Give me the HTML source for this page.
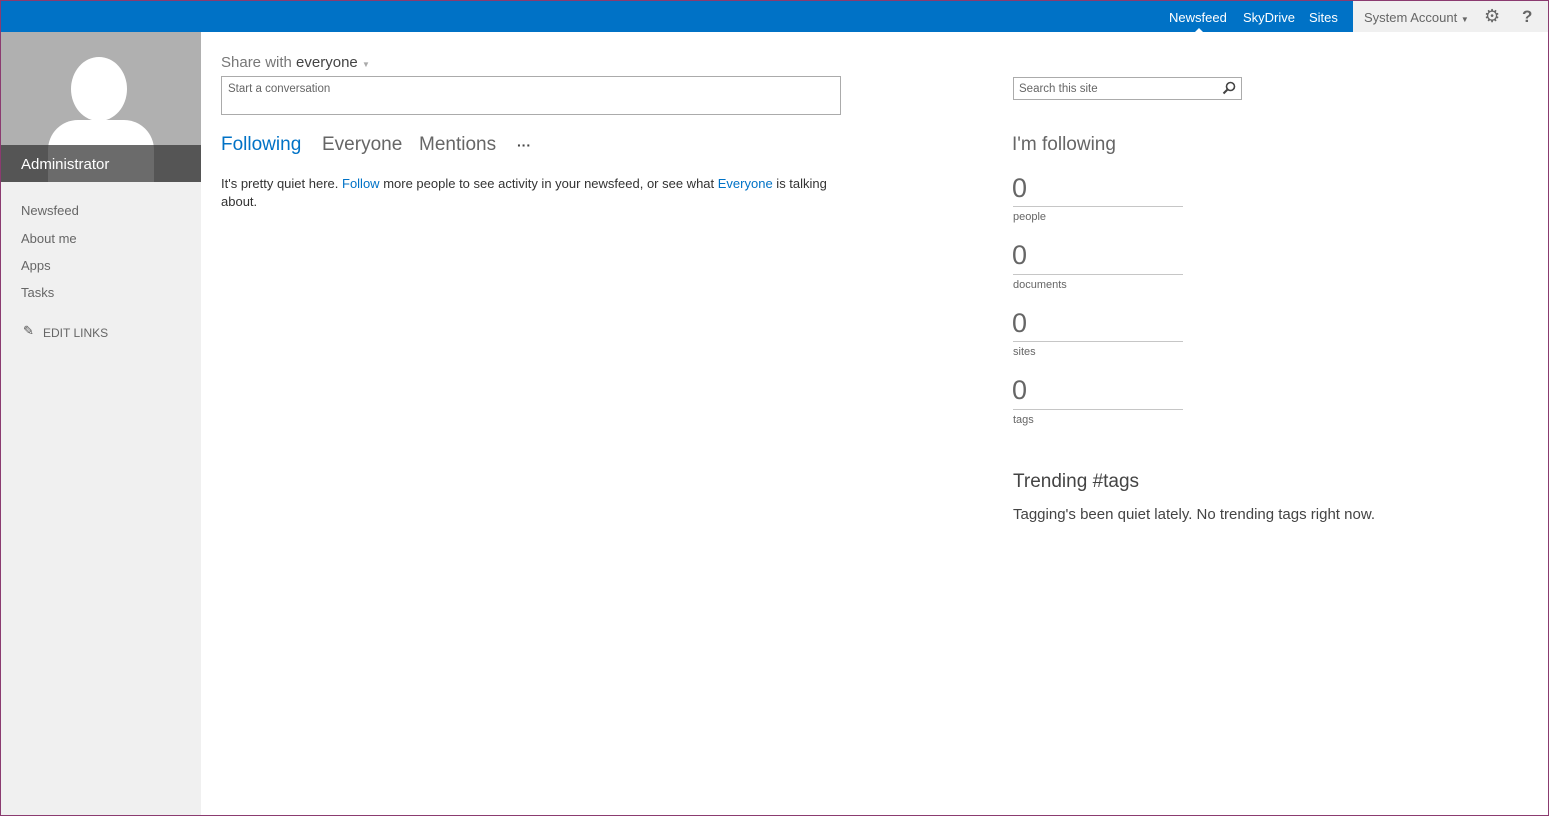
<!DOCTYPE html>
<html><head><meta charset="utf-8"><style>
*{margin:0;padding:0;box-sizing:border-box}
body{width:1549px;height:816px;overflow:hidden;background:#fff;font-family:"Liberation Sans",sans-serif;color:#444;position:relative}
.a{position:absolute;white-space:nowrap}
#frame{position:absolute;left:0;top:0;width:1549px;height:816px;border:1px solid #8b3b70;pointer-events:none;z-index:9}
#bar{position:absolute;left:0;top:0;width:1549px;height:32px;background:#0072c6}
#acct{position:absolute;left:1353px;top:0;width:196px;height:32px;background:#f0f0f0}
#side{position:absolute;left:0;top:32px;width:201px;height:784px;background:#f0f0f0}
#pic{position:absolute;left:0;top:32px;width:201px;height:150px;background:#b0b0b0;overflow:hidden}
.blue{color:#0072c6}
.num{font-size:27px;color:#666}
.line{position:absolute;left:1013px;width:170px;height:1px;background:#c6c6c6}
.lbl{font-size:11px;color:#666}
</style></head><body>
<div id="bar"></div>
<div class="a" style="left:1169px;top:10px;font-size:13px;color:#fff">Newsfeed</div>
<div class="a" style="left:1195px;top:28px;width:0;height:0;border-left:4px solid transparent;border-right:4px solid transparent;border-bottom:4px solid #fff"></div>
<div class="a" style="left:1243px;top:10px;font-size:13px;color:#fff">SkyDrive</div>
<div class="a" style="left:1309px;top:10px;font-size:13px;color:#fff">Sites</div>
<div id="acct"></div>
<div class="a" style="left:1364px;top:10px;font-size:13px;color:#666">System Account <span style="font-size:8px">▼</span></div>
<div class="a" style="left:1484px;top:6px;font-size:18px;color:#666">⚙</div>
<div class="a" style="left:1522px;top:7px;font-size:17px;font-weight:bold;color:#666">?</div>

<div id="side"></div>
<div id="pic">
<div class="a" style="left:71px;top:25px;width:56px;height:64px;border-radius:50%;background:#fff"></div>
<div class="a" style="left:48px;top:88px;width:106px;height:80px;background:#fff;border-radius:30px 30px 0 0"></div>
<div class="a" style="left:0;top:113px;width:201px;height:37px;background:rgba(50,50,50,0.72)"></div>
<div class="a" style="left:21px;top:124px;font-size:15px;color:#fff">Administrator</div>
</div>
<div class="a" style="left:21px;top:203px;font-size:13px;color:#666">Newsfeed</div>
<div class="a" style="left:21px;top:231px;font-size:13px;color:#666">About me</div>
<div class="a" style="left:21px;top:258px;font-size:13px;color:#666">Apps</div>
<div class="a" style="left:21px;top:285px;font-size:13px;color:#666">Tasks</div>
<div class="a" style="left:23px;top:323px;font-size:13px;color:#555">✎</div>
<div class="a" style="left:43px;top:326px;font-size:12px;color:#666">EDIT LINKS</div>

<div class="a" style="left:221px;top:54px;font-size:15px;color:#777">Share with <span style="color:#444">everyone</span> <span style="font-size:8px;color:#aaa">▼</span></div>
<div class="a" style="left:221px;top:76px;width:620px;height:39px;border:1px solid #ababab"></div>
<div class="a" style="left:228px;top:83px;font-size:11.5px;color:#666">Start a conversation</div>
<div class="a" style="left:221px;top:134px;font-size:19px;color:#0072c6">Following</div>
<div class="a" style="left:322px;top:134px;font-size:19px;color:#666">Everyone</div>
<div class="a" style="left:419px;top:134px;font-size:19px;color:#666">Mentions</div>
<div class="a" style="left:517px;top:137px;font-size:14px;color:#444;font-weight:bold">···</div>
<div class="a" style="left:221px;top:175px;font-size:13px;color:#333;line-height:18px">It's pretty quiet here. <span class="blue">Follow</span> more people to see activity in your newsfeed, or see what <span class="blue">Everyone</span> is talking<br>about.</div>

<div class="a" style="left:1013px;top:77px;width:229px;height:23px;border:1px solid #ababab"></div>
<div class="a" style="left:1019px;top:83px;font-size:11.5px;color:#666">Search this site</div>
<svg class="a" style="left:1222px;top:81px" width="14" height="14" viewBox="0 0 14 14"><circle cx="8.5" cy="5.5" r="4" fill="none" stroke="#444" stroke-width="1.6"/><line x1="5.5" y1="8.5" x2="1.5" y2="12.5" stroke="#444" stroke-width="2"/></svg>
<div class="a" style="left:1012px;top:134px;font-size:19px;color:#666">I'm following</div>
<div class="a num" style="left:1012px;top:173px">0</div><div class="line" style="top:206px"></div><div class="a lbl" style="left:1013px;top:211px">people</div>
<div class="a num" style="left:1012px;top:240px">0</div><div class="line" style="top:274px"></div><div class="a lbl" style="left:1013px;top:279px">documents</div>
<div class="a num" style="left:1012px;top:308px">0</div><div class="line" style="top:341px"></div><div class="a lbl" style="left:1013px;top:346px">sites</div>
<div class="a num" style="left:1012px;top:375px">0</div><div class="line" style="top:409px"></div><div class="a lbl" style="left:1013px;top:414px">tags</div>
<div class="a" style="left:1013px;top:471px;font-size:19px;color:#444">Trending #tags</div>
<div class="a" style="left:1013px;top:506px;font-size:15px;color:#444">Tagging's been quiet lately. No trending tags right now.</div>
<div id="frame"></div>
</body></html>
